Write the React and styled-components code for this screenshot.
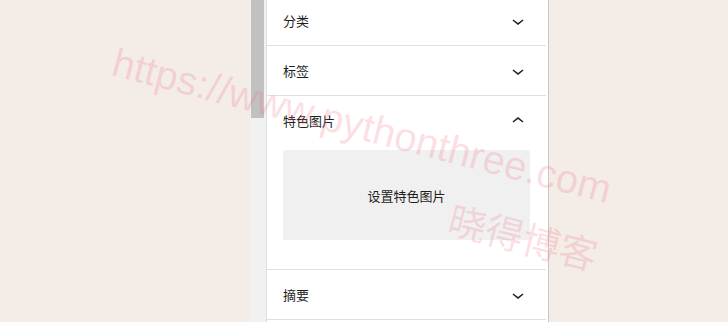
import React from "react";
import styled, { createGlobalStyle } from "styled-components";

const Global = createGlobalStyle`
  html, body { margin: 0; padding: 0; }
  body {
    background: #f3ece7;
    font-family: "Noto Sans CJK SC", "Noto Sans", sans-serif;
    overflow: hidden;
  }
`;

const Page = styled.div`
  position: relative;
  width: 728px;
  height: 322px;
  display: flex;
  overflow: hidden;
  background: #f3ece7;
`;

const Canvas = styled.div`
  width: 250px;
  flex-shrink: 0;
`;

const ScrollTrack = styled.div`
  width: 16px;
  flex-shrink: 0;
  background: #f1f1f1;
  padding-left: 1px;
  box-sizing: border-box;
`;

const ScrollThumb = styled.div`
  width: 13px;
  height: 118px;
  background: #c1c1c1;
`;

const Sidebar = styled.div`
  width: 283px;
  flex-shrink: 0;
  background: #fff;
  border-left: 1px solid #e0e0e0;
  border-right: 1px solid #c8c8c8;
  padding-right: 2px;
  box-sizing: border-box;
`;

const PanelList = styled.div`
  margin-top: -4px;
  display: flex;
  flex-direction: column;
`;

const Panel = styled.div`
  border-bottom: 1px solid #e0e0e0;
`;

const Header = styled.div`
  height: 49px;
  padding: 0 16px;
  display: flex;
  align-items: center;
  justify-content: space-between;
  font-size: 13px;
  color: #1e1e1e;
`;

const Body = styled.div`
  padding: 5px 16px 29px 16px;
`;

const Placeholder = styled.div`
  height: 90px;
  background: #f0f0f0;
  display: flex;
  align-items: center;
  justify-content: center;
  font-size: 13px;
  color: #1e1e1e;
  border-radius: 2px;
`;

const Watermark = styled.div`
  position: absolute;
  left: ${(p) => p.$x}px;
  top: ${(p) => p.$y}px;
  transform: rotate(${(p) => p.$r}deg);
  transform-origin: left top;
  font-family: ${(p) => p.$cjk ? '"Noto Sans CJK SC", sans-serif' : '"Liberation Sans", Arial, sans-serif'};
  font-size: ${(p) => p.$size}px;
  color: rgba(240, 110, 130, 0.22);
  white-space: nowrap;
  pointer-events: none;
`;

const Chevron = ({ up }) => (
  <svg width="24" height="24" viewBox="0 0 24 24" fill="#1e1e1e">
    {up ? (
      <path d="M6.5 12.4L12 8l5.5 4.4-.9 1.2L12 10l-4.6 3.6-1-1.2z" />
    ) : (
      <path d="M17.5 11.6L12 16l-5.5-4.4.9-1.2L12 14l4.6-3.6 1 1.2z" />
    )}
  </svg>
);

export default function App() {
  return (
    <>
      <Global />
      <Page>
        <Canvas />
        <ScrollTrack>
          <ScrollThumb />
        </ScrollTrack>
        <Sidebar>
          <PanelList>
            <Panel>
              <Header>
                <span>分类</span>
                <Chevron />
              </Header>
            </Panel>
            <Panel>
              <Header>
                <span>标签</span>
                <Chevron />
              </Header>
            </Panel>
            <Panel>
              <Header>
                <span>特色图片</span>
                <Chevron up />
              </Header>
              <Body>
                <Placeholder>设置特色图片</Placeholder>
              </Body>
            </Panel>
            <Panel>
              <Header>
                <span>摘要</span>
                <Chevron />
              </Header>
            </Panel>
          </PanelList>
        </Sidebar>
        <Watermark $x={119} $y={40} $r={14.5} $size={40}>
          https://www.pythonthree.com
        </Watermark>
        <Watermark $x={457} $y={190} $r={14.5} $size={38} $cjk>
          晓得博客
        </Watermark>
      </Page>
    </>
  );
}
